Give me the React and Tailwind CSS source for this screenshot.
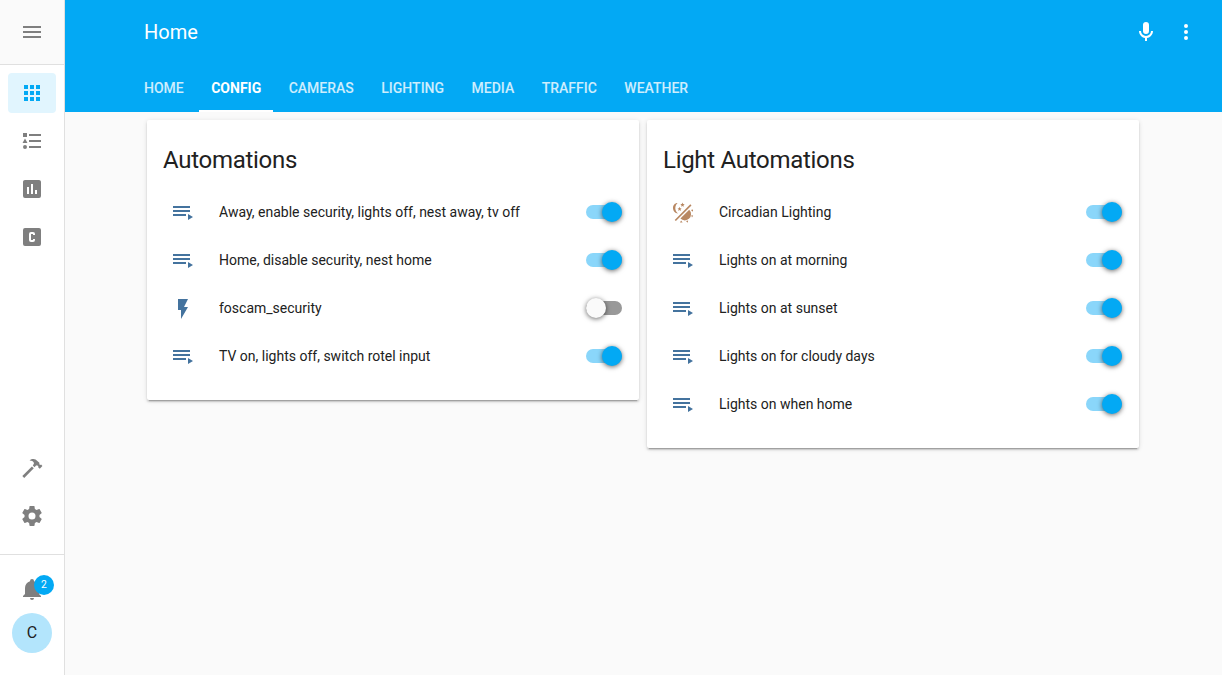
const ICONS = {
  menu: 'M3,6H21V8H3V6M3,11H21V13H3V11M3,16H21V18H3V16Z',
  apps: 'M16,20H20V16H16M16,14H20V10H16M10,8H14V4H10M16,8H20V4H16M10,14H14V10H10M4,14H8V10H4M4,20H8V16H4M10,20H14V16H10M4,8H8V4H4V8Z',
  list: 'M5,9.5L7.5,14H2.5L5,9.5M3,4H7V8H3V4M5,20A2,2 0 0,0 7,18A2,2 0 0,0 5,16A2,2 0 0,0 3,18A2,2 0 0,0 5,20M9,5V7H21V5H9M9,19H21V17H9V19M9,13H21V11H9V13Z',
  chart: 'M17,17H15V13H17M13,17H11V7H13M9,17H7V10H9M19,3H5C3.89,3 3,3.89 3,5V19A2,2 0 0,0 5,21H19A2,2 0 0,0 21,19V5C21,3.89 20.1,3 19,3Z',
  box: 'M11,7A2,2 0 0,0 9,9V15A2,2 0 0,0 11,17H13A2,2 0 0,0 15,15V14H13V15H11V9H13V10H15V9A2,2 0 0,0 13,7H11M5,3H19A2,2 0 0,1 21,5V19A2,2 0 0,1 19,21H5A2,2 0 0,1 3,19V5A2,2 0 0,1 5,3Z',
  hammer: 'M2.3,20L11.9,10.4L13.8,12.3L4.2,21.9ZM9.6,4.4C11.3,3 13.8,2.6 15.6,3.6L19.4,6.7L19.3,8.2L20.3,8.9L21.1,8.6L22.4,10L19.8,12.8L18.3,11.4V10.3L17,9.3L15.8,9.7L14.6,11.2L12.8,9.4L14,7.6C14,5.6 12,4.4 9.6,4.4Z',
  settings: 'M12,15.5A3.5,3.5 0 0,1 8.5,12A3.5,3.5 0 0,1 12,8.5A3.5,3.5 0 0,1 15.5,12A3.5,3.5 0 0,1 12,15.5M19.43,12.97C19.47,12.65 19.5,12.33 19.5,12C19.5,11.67 19.47,11.34 19.43,11L21.54,9.37C21.73,9.22 21.78,8.95 21.66,8.73L19.66,5.27C19.54,5.05 19.27,4.96 19.05,5.05L16.56,6.05C16.04,5.66 15.5,5.32 14.87,5.07L14.5,2.42C14.46,2.18 14.25,2 14,2H10C9.75,2 9.54,2.18 9.5,2.42L9.13,5.07C8.5,5.32 7.96,5.66 7.44,6.05L4.95,5.05C4.73,4.96 4.46,5.05 4.34,5.27L2.34,8.73C2.21,8.95 2.27,9.22 2.46,9.37L4.57,11C4.53,11.34 4.5,11.67 4.5,12C4.5,12.33 4.53,12.65 4.57,12.97L2.46,14.63C2.27,14.78 2.21,15.05 2.34,15.27L4.34,18.73C4.46,18.95 4.73,19.03 4.95,18.95L7.44,17.94C7.96,18.34 8.5,18.68 9.13,18.93L9.5,21.58C9.54,21.82 9.75,22 10,22H14C14.25,22 14.46,21.82 14.5,21.58L14.87,18.93C15.5,18.67 16.04,18.34 16.56,17.94L19.05,18.95C19.27,19.03 19.54,18.95 19.66,18.73L21.66,15.27C21.78,15.05 21.73,14.78 21.54,14.63L19.43,12.97Z',
  bell: 'M21,19V20H3V19L5,17V11C5,7.9 7.03,5.17 10,4.29C10,4.19 10,4.1 10,4A2,2 0 0,1 12,2A2,2 0 0,1 14,4C14,4.1 14,4.19 14,4.29C16.97,5.17 19,7.9 19,11V17L21,19M14,21A2,2 0 0,1 12,23A2,2 0 0,1 10,21',
  microphone: 'M12,2A3,3 0 0,1 15,5V11A3,3 0 0,1 12,14A3,3 0 0,1 9,11V5A3,3 0 0,1 12,2M19,11C19,14.53 16.39,17.44 13,17.93V21H11V17.93C7.61,17.44 5,14.53 5,11H7A5,5 0 0,0 12,16A5,5 0 0,0 17,11H19Z',
  dots: 'M12,16A2,2 0 0,1 14,18A2,2 0 0,1 12,20A2,2 0 0,1 10,18A2,2 0 0,1 12,16M12,10A2,2 0 0,1 14,12A2,2 0 0,1 12,14A2,2 0 0,1 10,12A2,2 0 0,1 12,10M12,4A2,2 0 0,1 14,6A2,2 0 0,1 12,8A2,2 0 0,1 10,6A2,2 0 0,1 12,4Z',
  playlist: 'M19,9H2V11H19V9M19,5H2V7H19V5M2,15H15V13H2V15M17,13V19L22,16L17,13Z',
  flash: 'M7,2V13H10V22L17,10H13L17,2H7Z',
  circadian:
    'M19.3,3.3L20.5,4.5L4.9,20.1L3.7,18.9ZM6.6,2C3.8,2 2,4.2 2,6.9C2,9.9 4,12.3 7.2,12.4C5.4,11.2 4.3,9.2 4.3,7.2C4.3,5.1 5.2,3.2 6.6,2ZM11.5,1.5L12.1,3.1L13.7,3.2L12.5,4.2L12.8,5.8L11.5,5L10.2,5.8L10.5,4.2L9.3,3.2L10.9,3.1ZM8.6,5.8L9.2,7.3L10.7,7.4L9.6,8.3L9.9,9.9L8.6,9.1L7.3,9.9L7.6,8.3L6.5,7.4L8,7.3ZM18.2,8.8A5.8,5.8 0 1,1 9.4,17.6ZM19.8,9.1L22,8.4V10.8ZM20.2,14.2L22.2,14.4L21,16.4ZM15,19.9L17.2,19.6L16.6,21.8ZM9,21.6L10.1,19.6L11.6,21.4Z',
};

function Icon({ name, className = '' }) {
  return (
    <svg viewBox="0 0 24 24" className={`size-6 shrink-0 fill-current ${className}`} aria-hidden="true">
      <path d={ICONS[name]} fillRule={name === 'circadian' ? 'nonzero' : 'evenodd'} />
    </svg>
  );
}

function NavItem({ name, active }) {
  return (
    <a className={`flex h-10 w-12 items-center justify-center rounded ${active ? 'bg-[#e1f5fe] text-[#03a9f4]' : 'text-[#7f7f7f]'}`}>
      <Icon name={name} />
    </a>
  );
}

function Sidebar() {
  return (
    <aside className="flex w-[65px] shrink-0 flex-col border-r border-[#e0e0e0] bg-white">
      <div className="flex h-[65px] items-center justify-center border-b border-[#e0e0e0] bg-[#fafafa] text-[#7f7f7f]">
        <Icon name="menu" />
      </div>
      <nav className="flex flex-1 flex-col items-center gap-2 pt-2">
        <NavItem name="apps" active />
        <NavItem name="list" />
        <NavItem name="chart" />
        <NavItem name="box" />
        <div className="flex-1" />
        <NavItem name="hammer" />
        <NavItem name="settings" />
      </nav>
      <div className="mt-[18px] flex h-[121px] flex-col items-center border-t border-[#e0e0e0] pt-[22px]">
        <div className="relative text-[#7f7f7f]">
          <Icon name="bell" />
          <span className="absolute -top-0.5 left-3.5 flex size-5 items-center justify-center rounded-full bg-[#03a9f4] text-[10.4px] text-white">2</span>
        </div>
        <div className="mt-3 flex size-10 shrink-0 items-center justify-center rounded-full bg-[#b3e5fc] text-base text-[#212121]">C</div>
      </div>
    </aside>
  );
}

const TABS = ['Home', 'Config', 'Cameras', 'Lighting', 'Media', 'Traffic', 'Weather'];

function Header() {
  return (
    <header className="flex h-28 flex-col bg-[#03a9f4] text-white">
      <div className="flex h-16 items-center pr-6 pl-[79px]">
        <h1 className="flex-1 text-xl font-normal">Home</h1>
        <div className="flex gap-4">
          <Icon name="microphone" />
          <Icon name="dots" />
        </div>
      </div>
      <nav className="flex h-12 gap-[3.47px] pl-[67px] text-sm uppercase">
        {TABS.map((tab) => (
          <a
            key={tab}
            className={`flex h-12 items-center border-b-2 px-3 pt-0.5 ${tab === 'Config' ? 'border-white font-bold' : 'border-transparent font-medium text-white/80'}`}
          >
            {tab}
          </a>
        ))}
      </nav>
    </header>
  );
}

function Toggle({ on }) {
  return (
    <span className={`flex h-3.5 w-9 items-center rounded-full ${on ? 'justify-end bg-[#8ad6fa]' : 'justify-start bg-[#999]'}`}>
      <span className={`size-5 shrink-0 rounded-full shadow-[0_1px_5px_rgba(0,0,0,0.6)] ${on ? 'bg-[#03a9f4]' : 'bg-[#fafafa]'}`} />
    </span>
  );
}

function Card({ title, rows }) {
  return (
    <section className="w-[492px] rounded-[2px] bg-white px-4 pb-5 text-[#212121] shadow-[0_2px_2px_0_rgba(0,0,0,0.14),0_1px_5px_0_rgba(0,0,0,0.12),0_3px_1px_-2px_rgba(0,0,0,0.2)]">
      <h2 className="flex h-[68px] items-center pt-3 text-2xl font-normal tracking-[-0.012em]">{title}</h2>
      <ul>
        {rows.map(([icon, label, on = true]) => (
          <li key={label} className="flex h-12 items-center pr-px">
            <span className={`ml-2 pt-0.5 ${icon === 'circadian' ? 'text-[#b88761]' : 'text-[#44739e]'}`}>
              <Icon name={icon} className="block" />
            </span>
            <span className="ml-6 flex-1 text-sm">{label}</span>
            <Toggle on={on} />
          </li>
        ))}
      </ul>
    </section>
  );
}

export default function App() {
  return (
    <div className="flex h-[675px] w-[1222px] overflow-hidden bg-[#fafafa] font-['Roboto',sans-serif]">
      <Sidebar />
      <div className="flex min-w-0 flex-1 flex-col">
        <Header />
        <main className="flex items-start gap-2 pt-2 pl-[82px]">
          <Card
            title="Automations"
            rows={[
              ['playlist', 'Away, enable security, lights off, nest away, tv off'],
              ['playlist', 'Home, disable security, nest home'],
              ['flash', 'foscam_security', false],
              ['playlist', 'TV on, lights off, switch rotel input'],
            ]}
          />
          <Card
            title="Light Automations"
            rows={[
              ['circadian', 'Circadian Lighting'],
              ['playlist', 'Lights on at morning'],
              ['playlist', 'Lights on at sunset'],
              ['playlist', 'Lights on for cloudy days'],
              ['playlist', 'Lights on when home'],
            ]}
          />
        </main>
      </div>
    </div>
  );
}
